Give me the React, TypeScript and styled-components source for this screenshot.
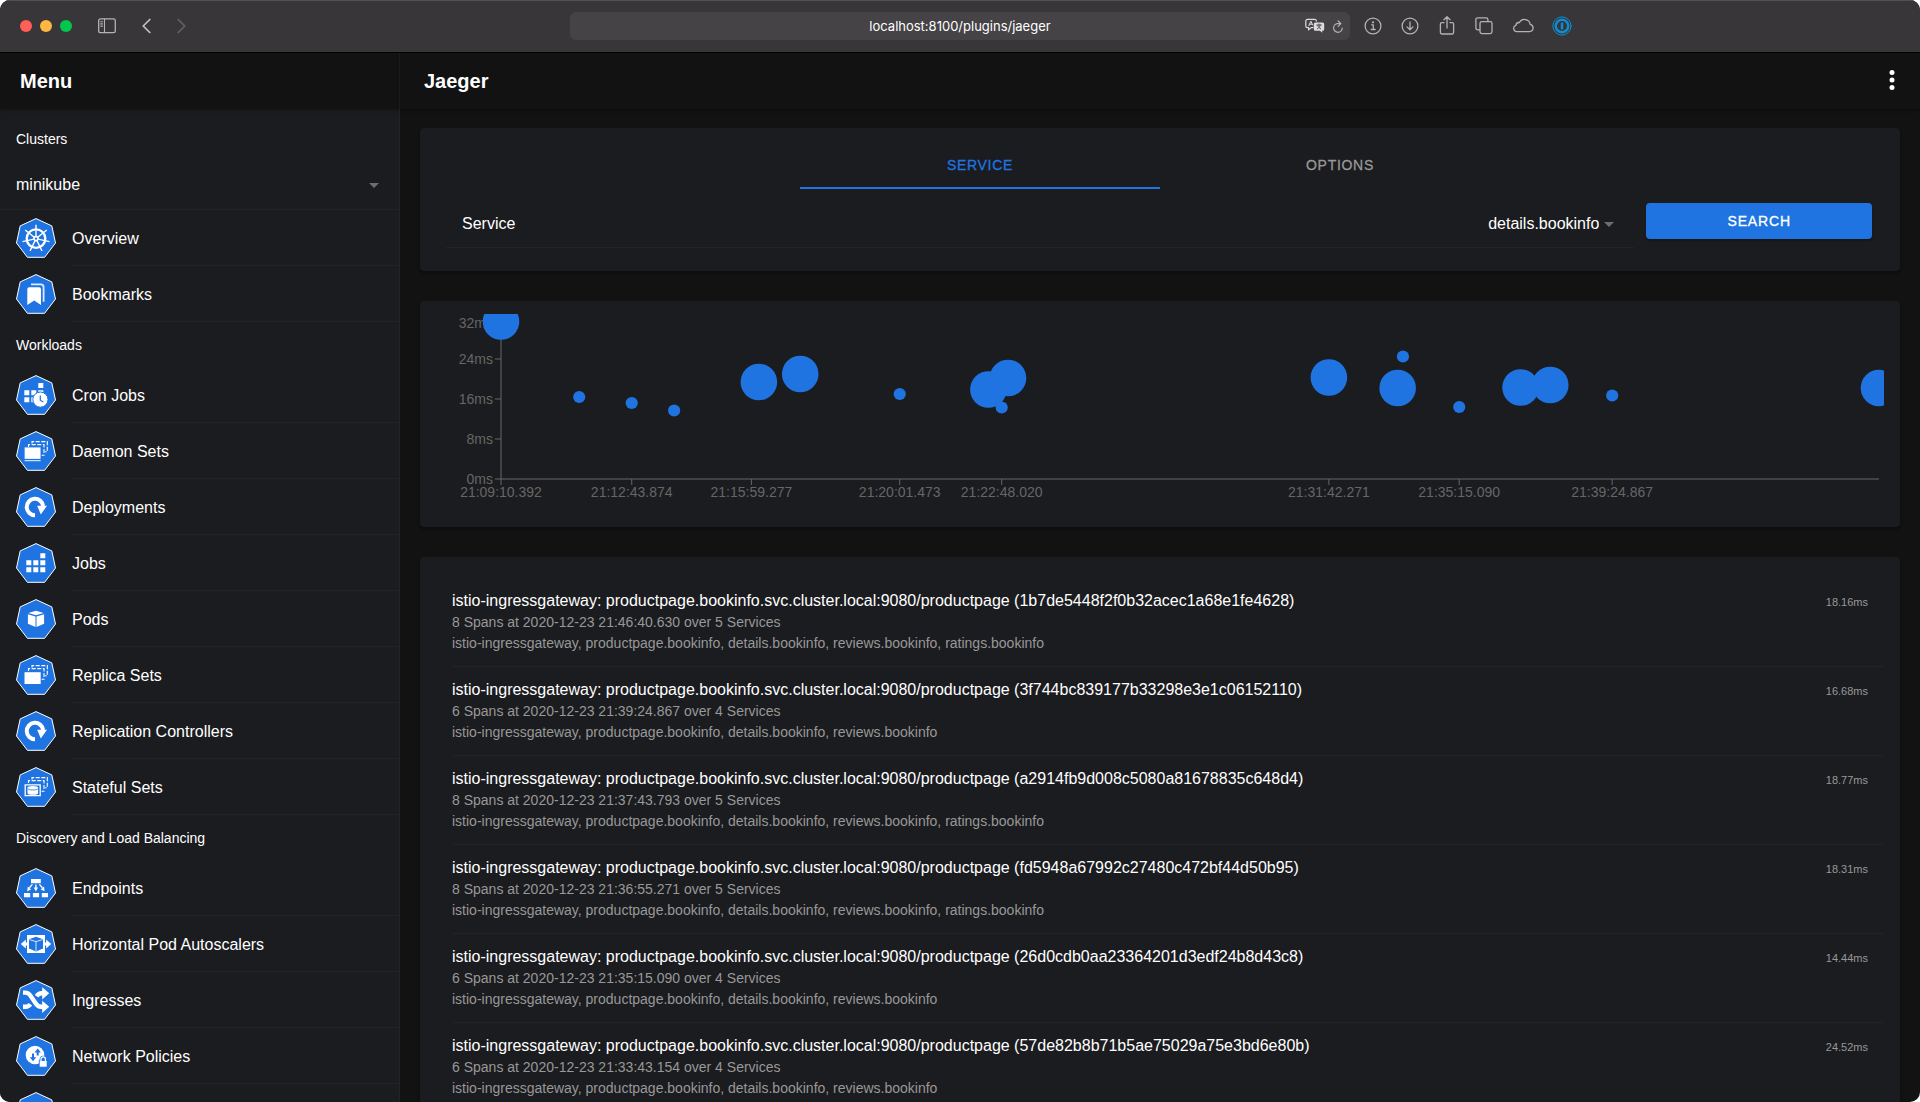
import React, { useEffect, useRef, useState } from 'react';
import styled, { createGlobalStyle, css } from 'styled-components';

const c = {
  blue: '#1f74e1',
  page: '#121212',
  surface: '#1b1c1f',
  line: '#222324',
  text: '#ffffff',
  muted: '#989898',
  axis: '#666666',
  chrome: '#393639',
  field: '#454346',
  icon: '#b4b2b4',
};

const GlobalStyle = createGlobalStyle`
  *, *::before, *::after { box-sizing: border-box; }
  body {
    margin: 0;
    background: #ffffff;
    color: ${c.text};
    font-family: "Liberation Sans", Arial, sans-serif;
    font-size: 16px;
  }
  button, input, select { font: inherit; color: inherit; }
  ul { margin: 0; padding: 0; list-style: none; }
  svg { display: block; flex: none; }
`;

/* ---------- window ---------- */

const Window = styled.div`
  display: flex;
  flex-direction: column;
  height: 100vh;
  overflow: hidden;
  border-radius: 10px;
  background: ${c.page};
`;

const Chrome = styled.header`
  display: grid;
  grid-template-columns: 1fr minmax(300px, 780px) 1fr;
  align-items: center;
  flex: none;
  height: 53px;
  padding-bottom: 1px;
  background: ${c.chrome};
  border-top: 1px solid #545154;
  border-bottom: 1px solid #000000;
`;

const ChromeLeft = styled.div`
  display: flex;
  align-items: center;
  gap: 26px;
  padding-left: 20px;
`;

const Lights = styled.div`
  display: flex;
  gap: 8px;
`;

const Light = styled.button<{ $color: string }>`
  width: 12px;
  height: 12px;
  padding: 0;
  border: 0;
  border-radius: 50%;
  background: ${(p) => p.$color};
`;

const IconButton = styled.button<{ $color?: string }>`
  display: flex;
  padding: 0;
  border: 0;
  background: none;
  color: ${(p) => p.$color ?? c.icon};
`;

const ChromeRight = styled.div`
  display: flex;
  align-items: center;
  gap: 17px;
  padding-left: 13px;
`;

const AddressBar = styled.div`
  display: grid;
  grid-template-columns: 45px 1fr 20px 10px;
  align-items: center;
  column-gap: 8px;
  height: 28px;
  padding-right: 7px;
  border-radius: 6px;
  background: ${c.field};
`;

const Address = styled.input`
  grid-column: 2;
  width: 100%;
  padding: 0;
  border: 0;
  outline: 0;
  background: none;
  text-align: center;
  font-family: Inter, sans-serif;
  font-size: 13px;
  line-height: 20px;
`;

const Body = styled.div`
  display: grid;
  grid-template-columns: 400px minmax(0, 1fr);
  flex: 1;
  min-height: 0;
`;

const Column = styled.div`
  display: flex;
  flex-direction: column;
  min-height: 0;
`;

const Sidebar = styled(Column)`
  background: ${c.surface};
  border-right: 1px solid ${c.line};
`;

const Toolbar = styled.div<{ $main?: boolean }>`
  display: flex;
  align-items: center;
  justify-content: space-between;
  flex: none;
  height: 56px;
  padding: 0 20px 0 ${(p) => (p.$main ? 24 : 20)}px;
  background: ${c.page};
  box-shadow: 0 1px 3px rgba(0, 0, 0, 0.35);
`;

const ToolbarTitle = styled.h1`
  margin: 0;
  font-size: 20px;
  line-height: 24px;
  font-weight: 700;
`;

const Scroll = styled.div`
  flex: 1;
  min-height: 0;
  overflow: auto;
  scrollbar-width: none;
`;

/* ---------- sidebar ---------- */

const Nav = styled(Scroll).attrs({ as: 'nav' })`
  padding-top: 7px;
`;

const SectionTitle = styled.h2`
  display: flex;
  align-items: center;
  height: 45px;
  margin: 0;
  padding: 0 16px;
  font-size: 14px;
  line-height: 20px;
  font-weight: 400;
`;

const SelectBox = styled.span<{ $wide?: boolean }>`
  display: flex;
  align-items: center;
  gap: 5px;
  ${(p) =>
    p.$wide &&
    css`
      height: 49px;
      padding: 0 20px 0 16px;
      border-bottom: 1px solid ${c.line};
      select { flex: 1; }
    `}
`;

const Select = styled.select`
  appearance: none;
  field-sizing: content;
  padding: 0;
  border: 0;
  outline: 0;
  background: none;
  line-height: 20px;
`;

const NavLink = styled.a`
  display: flex;
  gap: 16px;
  padding-left: 16px;
  color: inherit;
  text-decoration: none;
`;

const NavIcon = styled.span`
  padding: 8px 0;
`;

const NavLabel = styled.span`
  display: flex;
  flex: 1;
  align-items: center;
  height: 56px;
  padding-top: 2px;
  border-bottom: 1px solid ${c.line};
`;

/* ---------- main ---------- */

const Cards = styled(Scroll).attrs({ as: 'main' })`
  display: flex;
  flex-direction: column;
  gap: 30px;
  padding: 19px 20px;
`;

const Card = styled.section<{ $list?: boolean }>`
  flex: none;
  padding: ${(p) => (p.$list ? '21px 16px 21px 32px' : '13px 16px')};
  border-radius: 4px;
  background: ${c.surface};
  box-shadow: 0 2px 3px rgba(0, 0, 0, 0.35);
`;

const Tabs = styled.div`
  display: flex;
  justify-content: center;
`;

const Tab = styled.button<{ $active?: boolean }>`
  flex: 0 1 360px;
  height: 48px;
  padding: 2px 0 0;
  border: 0;
  border-bottom: 2px solid ${(p) => (p.$active ? c.blue : 'transparent')};
  background: none;
  color: ${(p) => (p.$active ? c.blue : c.muted)};
  font-size: 14px;
  letter-spacing: 0.05em;
  text-transform: uppercase;
  -webkit-text-stroke: 0.3px currentColor;
`;

const Form = styled.form`
  display: grid;
  grid-template-columns: 5fr 1fr;
  align-items: start;
  padding: 5px;
`;

const FormCell = styled.div`
  padding: 5px;
`;

const Field = styled.div`
  display: flex;
  align-items: center;
  justify-content: space-between;
  height: 49px;
  padding: 2px 20px 0 16px;
  border-bottom: 1px solid ${c.line};
`;

const SearchButton = styled.button`
  display: block;
  width: calc(100% - 4px);
  height: 36px;
  margin: 4px 2px;
  border: 0;
  border-radius: 4px;
  background: ${c.blue};
  color: #ffffff;
  font-size: 14px;
  letter-spacing: 0.06em;
  text-transform: uppercase;
  -webkit-text-stroke: 0.3px currentColor;
  box-shadow: 0 2px 2px rgba(0, 0, 0, 0.25);
`;

const ChartBox = styled.div`
  height: 200px;
  svg { width: 100%; height: 200px; }
  text {
    font-size: 14px;
    fill: ${c.axis};
  }
  line { stroke: ${c.axis}; }
  circle { fill: ${c.blue}; }
`;

const Trace = styled.li`
  display: grid;
  grid-template-columns: minmax(0, 1fr) auto;
  align-items: baseline;
  padding: 12px 16px 12px 0;
  border-bottom: 1px solid ${c.line};
`;

const TraceTitle = styled.h2`
  margin: 0;
  font-size: 16px;
  line-height: 22px;
  font-weight: 400;
`;

const TraceLine = styled.p`
  margin: 0;
  grid-column: 1;
  color: ${c.muted};
  font-size: 14px;
  line-height: 21px;
`;

const Duration = styled.span`
  color: ${c.muted};
  font-size: 11px;
`;

/* ---------- icons ---------- */

const Caret = () => (
  <svg width="10" height="5" viewBox="0 0 10 5" aria-hidden="true">
    <path d="M0 0h10L5 5z" fill="#6c6d6f" />
  </svg>
);

const w = '#ffffff';

const Stack = () => (
  <g fill="none" stroke={w} strokeWidth="1.1">
    <path d="M12.5 16v-2.4H28v10.6h-2.4" strokeDasharray="4 1.6" />
    <path d="M16 12.5V10.6h15.3v10.2h-2.2" strokeDasharray="4 1.6" />
  </g>
);

const Rotate = () => (
  <>
    <path d="M19 28.2A8.2 8.2 0 1 1 27.1 19" fill="none" stroke={w} strokeWidth="4" />
    <path d="M21.2 18.7H31L24.8 27.4z" fill={w} />
  </>
);

const glyphs: Record<string, React.ReactNode> = {
  overview: (
    <g stroke={w} fill="none">
      <circle cx="20" cy="20.6" r="9.3" strokeWidth="2.3" />
      <circle cx="20" cy="20.6" r="2" strokeWidth="1.6" />
      {[0, 1, 2, 3, 4, 5, 6].map((i) => (
        <path key={i} d="M20 18.4V6.8" strokeWidth="1.4" transform={`rotate(${(i * 360) / 7} 20 20.6)`} />
      ))}
    </g>
  ),
  bookmarks: (
    <>
      <path d="M11.3 31V15.2a2 2 0 0 1 2-2H23a2 2 0 0 1 2 2V31l-6.8-4.6z" fill={w} />
      <path d="M15 10.4h9.8a2.8 2.8 0 0 1 2.8 2.8v14.6" fill="none" stroke={w} strokeOpacity=".85" strokeWidth="1.8" />
    </>
  ),
  cron: (
    <>
      <path d="M22.3 8h5v5h-5zM22.3 15.3h5v2h-5zM8.3 15.3h5v5h-5zM15.3 15.3h5v5h-5zM8.3 22.3h5v5h-5zM15.3 22.3h4v5h-4z" fill={w} />
      <circle cx="24.4" cy="24.6" r="7.6" fill={w} stroke={c.blue} />
      <path d="M24.3 20.6v4.6l3 1.8" fill="none" stroke={c.blue} strokeWidth="1.2" />
    </>
  ),
  daemon: (
    <>
      <Stack />
      <path d="M8.5 16.3h16.2v11.8H8.5zM8.5 29.1h16.2v1.2H8.5z" fill={w} stroke={c.blue} strokeWidth=".3" />
    </>
  ),
  deploy: <Rotate />,
  jobs: (
    <path
      d="M24.3 10.3h5v5h-5zM10.3 17.3h5v5h-5zM17.3 17.3h5v5h-5zM24.3 17.3h5v5h-5zM10.3 24.3h5v5h-5zM17.3 24.3h5v5h-5zM24.3 24.3h5v5h-5z"
      fill={w}
    />
  ),
  pods: (
    <path d="M20 11.7l7.6 2.2-7.6 2.3-7.6-2.3zM11.9 15.2l7.6 2.2v10.6l-7.6-3.3zM28.1 15.2l-7.6 2.2v10.6l7.6-3.3z" fill={w} />
  ),
  replica: (
    <>
      <Stack />
      <path d="M8.5 17.2h16.2v11.8H8.5z" fill={w} />
    </>
  ),
  stateful: (
    <>
      <Stack />
      <path d="M9.2 17.8h15v10.8h-15z" fill={c.blue} stroke={w} strokeWidth="1.3" />
      <path d="M11.5 20.6v5.6c0 2 10.6 2 10.6 0v-5.6" fill={w} />
      <ellipse cx="16.8" cy="20.7" rx="5.3" ry="1.6" fill={w} />
      <path d="M11.6 21.6c1 1.8 9.4 1.8 10.4 0" fill="none" stroke={c.blue} strokeWidth=".8" />
    </>
  ),
  endpoints: (
    <>
      <path d="M15 11h9.8v4.2H15zM8 25h6.2v4.3H8zM16.9 25h6.2v4.3h-6.2zM25.8 25H32v4.3h-6.2z" fill={w} />
      <path d="M16.4 16.4l-3 3.4M19.9 16.4v4M23.4 16.4l3 3.4" stroke={w} strokeWidth="1.4" />
      <path d="M11.2 23.2l.6-4.6 3.4 3zM17.8 19.6h4.2l-2.1 3.8zM28.6 23.2l-.6-4.6-3.4 3z" fill={w} />
    </>
  ),
  hpa: (
    <>
      <path d="M11 11h18v18H11z" fill={w} />
      <path d="M4.8 20l5-4.6v3h2v3.2h-2v3zM35.2 20l-5-4.6v3h-2v3.2h2v3z" fill={w} />
      <path d="M20 12.8l7 2.4v9.2l-7 3-7-3v-9.2z" fill={c.blue} />
      <path d="M13.4 15.6l6.6 2 6.6-2M20 17.6V27" fill="none" stroke={w} strokeWidth=".8" />
    </>
  ),
  ingress: (
    <>
      <path
        d="M7 26.8h2.6c2.4 0 3.6-1 4.8-2.6M20.6 16.2c1.2-1.8 2.6-2.9 5-2.9h1.8M7 12.6h2.2c2.6 0 4 1.2 5.2 3l5.4 8c1.3 2 2.6 3.2 5.2 3.2h2.4"
        fill="none"
        stroke={w}
        strokeWidth="4.4"
      />
      <path d="M26.2 7.2l7 6.1-7 6.1zM26.2 20.7l7 6.1-7 6.1z" fill={w} />
    </>
  ),
  network: (
    <>
      <circle cx="19" cy="19" r="9.3" fill={w} />
      <path d="M20.7 19.6v-3.2h-2.2l3.2-4 3.2 4h-2.2v3.2zM16 17.6v3.6h-2.2l3.2 4 3.2-4H18v-3.6z" fill={c.blue} />
      <path d="M22.8 24.2h9v7.4h-9z" fill={c.blue} />
      <circle cx="27.2" cy="23.4" r="3.6" fill={c.blue} />
      <path d="M25 25v-2a2.2 2.2 0 0 1 4.4 0v2" fill="none" stroke={w} strokeWidth="1.2" />
      <path d="M23.7 25h7v5.8h-7z" fill={w} />
    </>
  ),
  services: <path d="M15 11h10v4H15zM8 25h6v4H8zM17 25h6v4h-6zM26 25h6v4h-6zM19.5 15h1v10h-1z" fill={w} />,
};

const ResourceIcon = ({ name }: { name: string }) => (
  <svg width="40" height="40" viewBox="0 0 40 40" aria-hidden="true">
    <path
      d="M20 .6L35.8 7.9L39.5 25L28.6 39.3H11.4L.5 25L4.2 7.9z"
      fill={c.blue}
      stroke={w}
      strokeLinejoin="round"
    />
    {glyphs[name]}
  </svg>
);

const Stroke = ({ width = 20, height = 20, children }: { width?: number; height?: number; children: React.ReactNode }) => (
  <svg
    width={width}
    height={height}
    viewBox={`0 0 ${width} ${height}`}
    fill="none"
    stroke="currentColor"
    strokeWidth="1.3"
    strokeLinecap="round"
    strokeLinejoin="round"
    aria-hidden="true"
  >
    {children}
  </svg>
);

/* ---------- data ---------- */

const sections = [
  {
    title: 'Workloads',
    items: [
      ['cron', 'Cron Jobs'],
      ['daemon', 'Daemon Sets'],
      ['deploy', 'Deployments'],
      ['jobs', 'Jobs'],
      ['pods', 'Pods'],
      ['replica', 'Replica Sets'],
      ['deploy', 'Replication Controllers'],
      ['stateful', 'Stateful Sets'],
    ],
  },
  {
    title: 'Discovery and Load Balancing',
    items: [
      ['endpoints', 'Endpoints'],
      ['hpa', 'Horizontal Pod Autoscalers'],
      ['ingress', 'Ingresses'],
      ['network', 'Network Policies'],
      ['services', 'Services'],
    ],
  },
];

const traces = [
  { id: '1b7de5448f2f0b32acec1a68e1fe4628', spans: 8, time: '21:46:40.630', ms: '18.16', ratings: true },
  { id: '3f744bc839177b33298e3e1c06152110', spans: 6, time: '21:39:24.867', ms: '16.68', ratings: false },
  { id: 'a2914fb9d008c5080a81678835c648d4', spans: 8, time: '21:37:43.793', ms: '18.77', ratings: true },
  { id: 'fd5948a67992c27480c472bf44d50b95', spans: 8, time: '21:36:55.271', ms: '18.31', ratings: true },
  { id: '26d0cdb0aa23364201d3edf24b8d43c8', spans: 6, time: '21:35:15.090', ms: '14.44', ratings: false },
  { id: '57de82b8b71b5ae75029a75e3bd6e80b', spans: 6, time: '21:33:43.154', ms: '24.52', ratings: false },
];

// [seconds since the first trace, duration in ms, whether it has eight spans]
const points: [number, number, boolean][] = [
  [0, 31.5, true],
  [127.7, 16.4, false],
  [213.5, 15.2, false],
  [282.7, 13.7, false],
  [421.1, 19.4, true],
  [488.6, 21, true],
  [651.1, 17, false],
  [795.9, 17.9, true],
  [827.9, 20.2, true],
  [817.6, 14.3, false],
  [1351.9, 20.3, true],
  [1472.8, 24.5, false],
  [1464.2, 18.2, true],
  [1564.7, 14.4, false],
  [1664.9, 18.3, true],
  [1713.4, 18.8, true],
  [1814.5, 16.7, false],
  [2250.2, 18.2, true],
];

const timeTicks: [number, string][] = [
  [0, '21:09:10.392'],
  [213.5, '21:12:43.874'],
  [408.9, '21:15:59.277'],
  [651.1, '21:20:01.473'],
  [817.6, '21:22:48.020'],
  [1351.9, '21:31:42.271'],
  [1564.7, '21:35:15.090'],
  [1814.5, '21:39:24.867'],
];

const Chart = () => {
  const box = useRef<HTMLDivElement>(null);
  const [width, setWidth] = useState(1448);
  useEffect(() => {
    if (!box.current) return;
    const observer = new ResizeObserver(([entry]) => setWidth(entry.contentRect.width));
    observer.observe(box.current);
    return () => observer.disconnect();
  }, []);

  const left = 65;
  const right = width - 5;
  const bottom = 165;
  const x = (s: number) => left + (s / 2250.2) * (right - left);
  const y = (ms: number) => bottom - ms * 5;

  return (
    <ChartBox ref={box}>
      <svg role="img" aria-label="Trace durations over time">
        <line x1={left} x2={right} y1={bottom} y2={bottom} />
        <line x1={left} x2={left} y1={5} y2={bottom} />
        {[0, 8, 16, 24, 32].map((ms) => (
          <g key={ms}>
            <line x1={left - 6} x2={left} y1={y(ms)} y2={y(ms)} />
            <text x={left - 8} y={ms === 32 ? 14 : y(ms) + 5} textAnchor="end">
              {ms}ms
            </text>
          </g>
        ))}
        {timeTicks.map(([s, label]) => (
          <g key={label}>
            <line x1={x(s)} x2={x(s)} y1={bottom} y2={bottom + 6} />
            <text x={x(s)} y={bottom + 18} textAnchor="middle">
              {label}
            </text>
          </g>
        ))}
        {points.map(([s, ms, big]) => (
          <circle key={s} cx={x(s)} cy={y(ms)} r={big ? 18.3 : 6.1} />
        ))}
      </svg>
    </ChartBox>
  );
};

const NavItem = ({ icon, label }: { icon: string; label: string }) => (
  <li>
    <NavLink href="#">
      <NavIcon>
        <ResourceIcon name={icon} />
      </NavIcon>
      <NavLabel>{label}</NavLabel>
    </NavLink>
  </li>
);

const BrowserChrome = () => (
  <Chrome>
    <ChromeLeft>
      <Lights>
        <Light $color="#ff5f57" aria-label="Close" />
        <Light $color="#ffb83f" aria-label="Minimize" />
        <Light $color="#00c84e" aria-label="Zoom" />
      </Lights>
      <IconButton aria-label="Sidebar">
        <Stroke width={18} height={16}>
          <rect x=".7" y=".9" width="16.6" height="13.8" rx="1.8" />
          <path d="M6.5 1v13.6M2.7 3.7h1.8M2.7 5.9h1.8M2.7 8.1h1.8" strokeWidth="1.1" />
        </Stroke>
      </IconButton>
      <IconButton aria-label="Back" $color="#c4c2c4">
        <Stroke width={9} height={16}>
          <path d="M7.8 1.5L1.2 8l6.6 6.5" strokeWidth="1.7" />
        </Stroke>
      </IconButton>
      <IconButton aria-label="Forward" $color="#636163">
        <Stroke width={9} height={16}>
          <path d="M1.2 1.5L7.8 8l-6.6 6.5" strokeWidth="1.7" />
        </Stroke>
      </IconButton>
    </ChromeLeft>
    <AddressBar>
      <Address aria-label="Address" defaultValue="localhost:8100/plugins/jaeger" />
      <IconButton aria-label="Translate" $color="#dddbdd">
        <Stroke width={20} height={16}>
          <path
            d="M8 9.6H6.2L3.6 11.8V9.6H2.4A1.6 1.6 0 0 1 .8 8V3A1.6 1.6 0 0 1 2.4 1.4h7.4A1.6 1.6 0 0 1 11.4 3"
            strokeWidth="1.2"
          />
          <path d="M3.8 7.8l2.1-4.6L7.6 7M4.7 6.2h2.4" strokeWidth="1" />
          <path
            d="M10.4 4.4h7.2a1.6 1.6 0 0 1 1.6 1.6v5.2a1.6 1.6 0 0 1-1.6 1.6h-.4v2l-2.3-2h-4.5a1.6 1.6 0 0 1-1.6-1.6V6a1.6 1.6 0 0 1 1.6-1.6z"
            fill="currentColor"
            stroke="none"
          />
          <path
            d="M11.7 7h4.6M14 6v1M12.4 10.8c1.6-.8 2.5-2 2.8-3.7M12.8 7.5c.4 1.5 1.3 2.6 2.9 3.3"
            stroke={c.field}
            strokeWidth=".9"
          />
        </Stroke>
      </IconButton>
      <IconButton aria-label="Reload">
        <Stroke width={10} height={16}>
          <path d="M9.2 10A4.3 4.3 0 1 1 4.9 5.7H7.6M5.2 3l2.7 2.7-2.7 2.7" strokeWidth="1.2" />
        </Stroke>
      </IconButton>
    </AddressBar>
    <ChromeRight>
      <IconButton aria-label="Info">
        <Stroke>
          <circle cx="10" cy="10" r="7.9" />
          <path d="M8.6 8.8h1.7v4.7M8.2 13.5h4" />
          <circle cx="10" cy="6.3" r=".5" fill="currentColor" />
        </Stroke>
      </IconButton>
      <IconButton aria-label="Downloads">
        <Stroke>
          <circle cx="10" cy="10" r="7.9" />
          <path d="M10 6v7.6M7 10.9l3 2.9 3-2.9" />
        </Stroke>
      </IconButton>
      <IconButton aria-label="Share">
        <Stroke>
          <path d="M7 6.6H4.8A1.4 1.4 0 0 0 3.4 8v8.6A1.4 1.4 0 0 0 4.8 18h10.4a1.4 1.4 0 0 0 1.4-1.4V8a1.4 1.4 0 0 0-1.4-1.4H13M10 12V1M7 3.7L10 .8l3 2.9" />
        </Stroke>
      </IconButton>
      <IconButton aria-label="Tab overview">
        <Stroke>
          <rect x="6" y="5.6" width="12" height="12" rx="1.8" />
          <path d="M5.8 13.8H3.7a1.8 1.8 0 0 1-1.8-1.8V3.6a1.8 1.8 0 0 1 1.8-1.8h8.4a1.8 1.8 0 0 1 1.8 1.8v1.8" />
        </Stroke>
      </IconButton>
      <IconButton aria-label="Cloud tabs">
        <Stroke width={24}>
          <path d="M6.4 15.6h12a3.7 3.7 0 0 0 .8-7.3A5.8 5.8 0 0 0 8.4 6.5a3.3 3.3 0 0 0-3.5 2.9A3.2 3.2 0 0 0 6.4 15.6z" />
        </Stroke>
      </IconButton>
      <IconButton aria-label="Password manager" $color="#0b8ed6">
        <Stroke>
          <circle cx="10" cy="10" r="9.1" strokeWidth="1" />
          <circle cx="10" cy="10" r="6.3" strokeWidth="2.4" />
          <path d="M10 6.6v6.8" strokeWidth="2.4" strokeLinecap="butt" />
        </Stroke>
      </IconButton>
    </ChromeRight>
  </Chrome>
);

export default function App() {
  return (
    <>
      <GlobalStyle />
      <Window>
        <BrowserChrome />
        <Body>
          <Sidebar>
            <Toolbar>
              <ToolbarTitle>Menu</ToolbarTitle>
            </Toolbar>
            <Nav>
              <SectionTitle as="label" htmlFor="cluster">
                Clusters
              </SectionTitle>
              <SelectBox $wide>
                <Select id="cluster">
                  <option>minikube</option>
                </Select>
                <Caret />
              </SelectBox>
              <ul>
                <NavItem icon="overview" label="Overview" />
                <NavItem icon="bookmarks" label="Bookmarks" />
              </ul>
              {sections.map((section) => (
                <React.Fragment key={section.title}>
                  <SectionTitle>{section.title}</SectionTitle>
                  <ul>
                    {section.items.map(([icon, label]) => (
                      <NavItem key={label} icon={icon} label={label} />
                    ))}
                  </ul>
                </React.Fragment>
              ))}
            </Nav>
          </Sidebar>
          <Column>
            <Toolbar $main>
              <ToolbarTitle>Jaeger</ToolbarTitle>
              <IconButton aria-label="More" $color="#ffffff">
                <svg width="16" height="24" viewBox="0 0 16 24" fill="currentColor" aria-hidden="true">
                  <circle cx="8" cy="3.5" r="2.5" />
                  <circle cx="8" cy="11" r="2.5" />
                  <circle cx="8" cy="18.5" r="2.5" />
                </svg>
              </IconButton>
            </Toolbar>
            <Cards>
              <Card>
                <Tabs role="tablist">
                  <Tab role="tab" aria-selected $active>
                    Service
                  </Tab>
                  <Tab role="tab" aria-selected={false}>
                    Options
                  </Tab>
                </Tabs>
                <Form onSubmit={(e) => e.preventDefault()}>
                  <FormCell>
                    <Field>
                      <label htmlFor="service">Service</label>
                      <SelectBox>
                        <Select id="service">
                          <option>details.bookinfo</option>
                        </Select>
                        <Caret />
                      </SelectBox>
                    </Field>
                  </FormCell>
                  <FormCell>
                    <SearchButton type="submit">Search</SearchButton>
                  </FormCell>
                </Form>
              </Card>
              <Card>
                <Chart />
              </Card>
              <Card $list>
                <ul>
                  {traces.map((t) => (
                    <Trace key={t.id}>
                      <TraceTitle>
                        istio-ingressgateway: productpage.bookinfo.svc.cluster.local:9080/productpage ({t.id})
                      </TraceTitle>
                      <Duration>{t.ms}ms</Duration>
                      <TraceLine>
                        {t.spans} Spans at 2020-12-23 {t.time} over {t.ratings ? 5 : 4} Services
                      </TraceLine>
                      <TraceLine>
                        istio-ingressgateway, productpage.bookinfo, details.bookinfo, reviews.bookinfo
                        {t.ratings && ', ratings.bookinfo'}
                      </TraceLine>
                    </Trace>
                  ))}
                </ul>
              </Card>
            </Cards>
          </Column>
        </Body>
      </Window>
    </>
  );
}
